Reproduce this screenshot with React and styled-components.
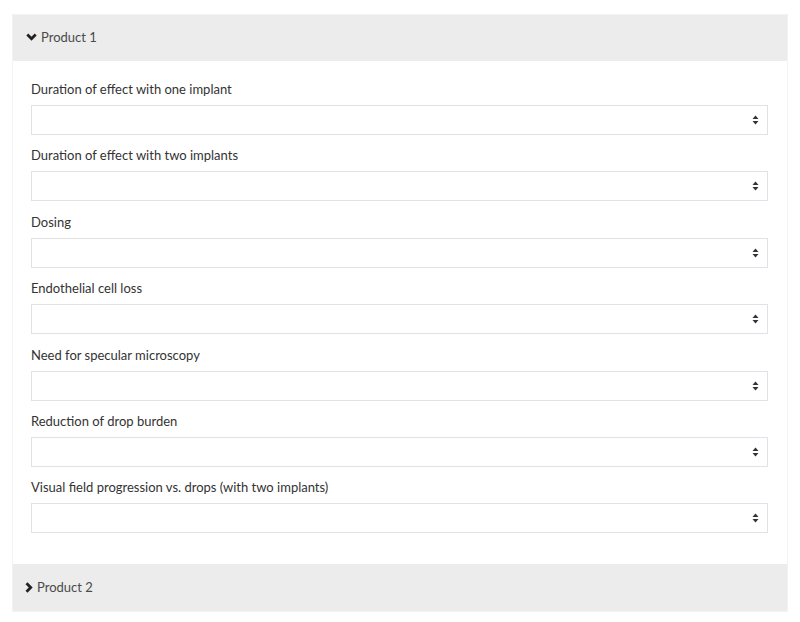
import React from "react";
import styled, { createGlobalStyle } from "styled-components";

const GlobalStyle = createGlobalStyle`
  html, body {
    margin: 0;
    padding: 0;
    background: #ffffff;
  }
  body {
    font-family: Lato, "Noto Sans", sans-serif;
    font-size: 13px;
    color: #333;
  }
`;

const Page = styled.div`
  padding: 14px 12px 10px;
`;

const Panel = styled.div`
  border: 1px solid #f3f3f3;
`;

const Header = styled.div`
  display: flex;
  align-items: center;
  gap: 4px;
  height: ${(p) => (p.$open ? "46px" : "47px")};
  padding-left: ${(p) => (p.$open ? "13px" : "12px")};
  padding-bottom: ${(p) => (p.$open ? "3px" : "0")};
  box-sizing: border-box;
  background: #ececec;
  color: #4a4a4a;
  cursor: pointer;
`;

const Chevron = styled.svg`
  width: ${(p) => (p.$down ? "11px" : "8px")};
  height: ${(p) => (p.$down ? "8px" : "11px")};
  flex-shrink: 0;
`;

const Body = styled.div`
  padding: 18px 19px 20px 18px;
  background: #fff;
`;

const Field = styled.div`
  display: flex;
  flex-direction: column;
  gap: 6px;
  margin-bottom: 10.4px;
`;

const Label = styled.label`
  line-height: 20px;
  color: #333;
`;

const SelectWrap = styled.div`
  position: relative;
  height: 30px;
`;

const Select = styled.select`
  appearance: none;
  width: 100%;
  height: 30px;
  box-sizing: border-box;
  border: 1px solid #dfe3e8;
  border-radius: 0;
  background: #fff;
  font: inherit;
  padding: 0 30px 0 8px;
  outline: none;
`;

const SortIcon = styled.svg`
  position: absolute;
  right: 9px;
  top: 10px;
  width: 7px;
  height: 10px;
  pointer-events: none;
`;

const fields = [
  "Duration of effect with one implant",
  "Duration of effect with two implants",
  "Dosing",
  "Endothelial cell loss",
  "Need for specular microscopy",
  "Reduction of drop burden",
  "Visual field progression vs. drops (with two implants)",
];

const Sort = () => (
  <SortIcon viewBox="0 0 7 10">
    <path d="M3.5 0.5 L6.5 4 L0.5 4 Z" fill="#333" />
    <path d="M0.5 6 L6.5 6 L3.5 9.5 Z" fill="#333" />
  </SortIcon>
);

const ChevronDown = () => (
  <Chevron $down viewBox="0 0 11 8">
    <path d="M1.3 1.5 L5.5 5.7 L9.7 1.5" fill="none" stroke="#222" strokeWidth="2.8" />
  </Chevron>
);

const ChevronRight = () => (
  <Chevron viewBox="0 0 8 11">
    <path d="M1.5 1.3 L5.7 5.5 L1.5 9.7" fill="none" stroke="#222" strokeWidth="2.8" />
  </Chevron>
);

export default function App() {
  return (
    <>
      <GlobalStyle />
      <Page>
        <Panel>
          <Header $open>
            <ChevronDown />
            Product 1
          </Header>
          <Body>
            {fields.map((f) => (
              <Field key={f}>
                <Label>{f}</Label>
                <SelectWrap>
                  <Select defaultValue="">
                    <option value=""></option>
                  </Select>
                  <Sort />
                </SelectWrap>
              </Field>
            ))}
          </Body>
          <Header>
            <ChevronRight />
            Product 2
          </Header>
        </Panel>
      </Page>
    </>
  );
}
